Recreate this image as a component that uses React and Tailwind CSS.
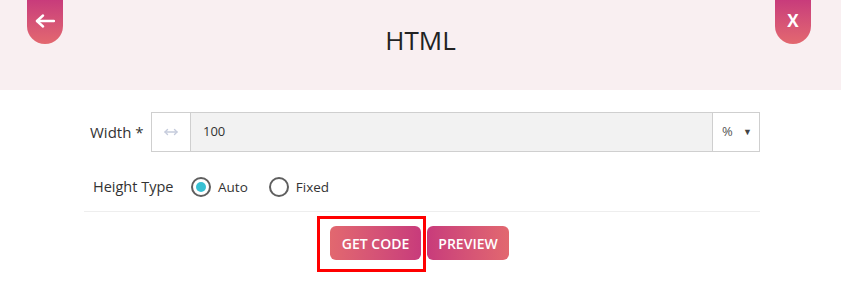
import { useState } from "react";

function BackArrow() {
  return (
    <svg width="20" height="14" viewBox="0 0 20 14" fill="none" stroke="white" strokeWidth="2.4" strokeLinecap="round" strokeLinejoin="round">
      <path d="M19 7H2" />
      <path d="M8 1.5L2 7l6 5.5" />
    </svg>
  );
}

function Radio({ checked, label, onClick }) {
  return (
    <label className="flex items-center gap-[7px] cursor-pointer" onClick={onClick}>
      <span className="w-[20px] h-[20px] rounded-full border-2 border-[#5f5f5f] flex items-center justify-center">
        {checked && <span className="w-[10px] h-[10px] rounded-full bg-[#37c0d3]"></span>}
      </span>
      <span className="text-[13.5px] text-[#333]">{label}</span>
    </label>
  );
}

export default function App() {
  const [heightType, setHeightType] = useState("auto");

  return (
    <div className="w-[841px] h-[304px] bg-white overflow-hidden" style={{ fontFamily: '"Open Sans", "Noto Sans", sans-serif' }}>
      {/* Header */}
      <div className="h-[90px] bg-[#f9eff1] flex items-start justify-between px-[27px] relative">
        <button className="w-[36px] h-[44px] rounded-b-[18px] bg-gradient-to-b from-[#c83b7b] to-[#e3686f] flex items-center justify-center pb-[2px]">
          <BackArrow />
        </button>
        <h1 className="absolute left-0 right-0 top-[27px] text-center text-[26px] text-[#222] leading-none" style={{ fontFamily: '"Open Sans", sans-serif' }}>HTML</h1>
        <button className="mr-[3px] w-[36px] h-[44px] rounded-b-[18px] bg-gradient-to-b from-[#c83b7b] to-[#e3686f] flex items-center justify-center text-white font-bold text-[17px] pb-[3px]">
          X
        </button>
      </div>

      {/* Form */}
      <div className="ml-[84px] w-[676px] pt-[22px]">
        <div className="flex items-center">
          <span className="w-[67px] pl-[6px] text-[15px] text-[#333]">Width *</span>
          <div className="flex-1 h-[40px] flex border border-[#cfcfcf]">
            <div className="w-[39px] flex items-center justify-center border-r border-[#cfcfcf] bg-white">
              <svg width="14" height="8" viewBox="0 0 14 8" fill="none" stroke="#c5cbdc" strokeWidth="1.4" strokeLinecap="round" strokeLinejoin="round">
                <path d="M1 4h12" />
                <path d="M3.5 1.5L1 4l2.5 2.5" />
                <path d="M10.5 1.5L13 4l-2.5 2.5" />
              </svg>
            </div>
            <div className="flex-1 bg-[#f2f2f2] flex items-center pl-[12px] text-[13px] text-[#333]">100</div>
            <div className="w-[47px] border-l border-[#cfcfcf] bg-white flex items-center justify-between pl-[9px] pr-[7px]">
              <span className="text-[13px] text-[#555]">%</span>
              <span className="text-[9px] text-[#444]">▼</span>
            </div>
          </div>
        </div>

        <div className="flex items-center mt-[25px] h-[20px]">
          <span className="w-[107px] pl-[9px] text-[14.5px] text-[#333]">Height Type</span>
          <div className="flex items-center gap-[21px]">
            <Radio checked={heightType === "auto"} label="Auto" onClick={() => setHeightType("auto")} />
            <Radio checked={heightType === "fixed"} label="Fixed" onClick={() => setHeightType("fixed")} />
          </div>
        </div>

        <div className="mt-[14px] border-t border-[#eeeeee]"></div>

        <div className="flex justify-center gap-[6px] mt-[14px] pr-[5px]">
          <div className="relative">
            <button className="h-[34px] w-[91px] rounded-[6px] bg-gradient-to-r from-[#e2686f] to-[#c83b7b] text-white text-[14px] font-semibold">
              GET CODE
            </button>
            <span className="absolute left-[-13px] right-[-5px] top-[-10px] bottom-[-12px] border-[3px] border-[#f00] pointer-events-none"></span>
          </div>
          <button className="h-[34px] w-[82px] rounded-[6px] bg-gradient-to-r from-[#c83b7b] to-[#e2686f] text-white text-[14px] font-semibold">
            PREVIEW
          </button>
        </div>
      </div>
    </div>
  );
}
